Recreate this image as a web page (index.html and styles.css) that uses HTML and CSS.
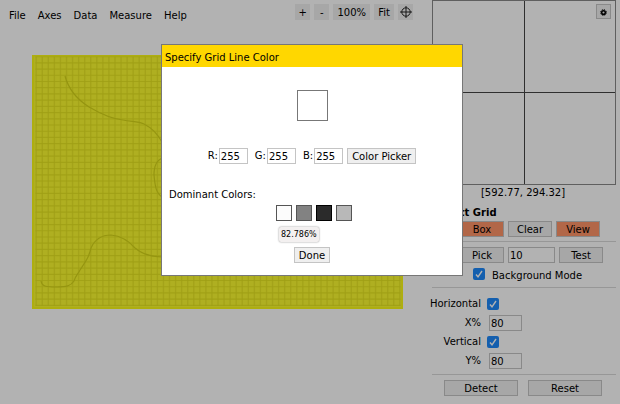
FILE: index.html
```html
<!DOCTYPE html>
<html lang="en">
<head>
<meta charset="utf-8">
<title>Plot digitizer</title>
<link rel="stylesheet" href="styles.css">
</head>
<body>
<div class="app">
  <main class="workspace">
    <header class="topbar">
      <nav class="menu">
        <a href="#">File</a><a href="#">Axes</a><a href="#">Data</a><a href="#">Measure</a><a href="#">Help</a>
      </nav>
      <div class="zoom-tools">
        <button class="flat step">+</button>
        <button class="flat step">-</button>
        <button class="flat wide">100%</button>
        <button class="flat">Fit</button>
        <button class="flat step icon" aria-label="Crosshair">
          <svg width="12" height="12" viewBox="0 0 12 12" fill="none" stroke="#222"><circle cx="6" cy="6" r="4.2"/><path d="M6 0v12M0 6h12"/></svg>
        </button>
      </div>
    </header>
    <svg class="plot" viewBox="0 0 371 254" role="img" aria-label="Plot image">
      <rect width="371" height="254" fill="#fbfb30"/>
      <path d="M3.5 126H368.5" stroke="#ebea26" stroke-width="250" stroke-dasharray="1.4 4.66"/>
      <path d="M186 1V251" stroke="#e4e31e" stroke-opacity=".8" stroke-width="365" stroke-dasharray="1.2 5.02"/>
      <path class="edge" d="M1 0V253H370V0"/>
      <path class="edge" d="M0 .5H371"/>
      <path class="curve" d="M33 21C37 36 46 45 57 52C69 59 80 64 91 65C100 67 105 66 112 69C120 73 125 78 130 87M131 103C124 105 122 111 122 120C123 131 124 138 130 142M9 226C10 232 15 232 25 232C34 232 39 231 42 226C44 220 46 219 48 215C54 206 57 202 59 193C63 184 70 180 79 180C89 181 97 186 103 193C110 199 118 202 131 202"/>
    </svg>
  </main>

  <aside class="sidebar">
    <div class="preview">
      <button class="settings" aria-label="Settings">
        <svg width="7" height="7" viewBox="0 0 7 7"><circle cx="3.5" cy="3.5" r="1.8" fill="none" stroke="#000" stroke-width="1.5"/><circle cx="3.5" cy="3.5" r="2.9" fill="none" stroke="#000" stroke-width="1" stroke-dasharray="1.2 1.08"/></svg>
      </button>
    </div>
    <p class="coords">[592.77, 294.32]</p>
    <h2>Detect Grid</h2>
    <div class="row mask">
      <button class="active">Box</button>
      <button>Clear</button>
      <button class="active">View</button>
    </div>
    <hr>
    <div class="row pick">
      <button>Pick</button>
      <input type="text" value="10" aria-label="Color distance">
      <button>Test</button>
    </div>
    <label class="mode"><input type="checkbox" checked> Background Mode</label>
    <hr>
    <div class="options">
      <label for="horizontal">Horizontal</label><input id="horizontal" type="checkbox" checked>
      <label for="xpct">X%</label><input id="xpct" type="text" value="80">
      <label for="vertical">Vertical</label><input id="vertical" type="checkbox" checked>
      <label for="ypct">Y%</label><input id="ypct" type="text" value="80">
    </div>
    <hr>
    <div class="row actions">
      <button>Detect</button>
      <button>Reset</button>
    </div>
  </aside>
</div>

<div class="shade">
  <section class="dialog" role="dialog" aria-labelledby="dialog-title">
    <h1 id="dialog-title">Specify Grid Line Color</h1>
    <div class="chosen"></div>
    <div class="rgb">
      <label for="red">R:</label><input id="red" type="text" value="255">
      <label for="green">G:</label><input id="green" type="text" value="255">
      <label for="blue">B:</label><input id="blue" type="text" value="255">
      <button>Color Picker</button>
    </div>
    <p class="caption">Dominant Colors:</p>
    <div class="swatches">
      <button class="swatch white" aria-label="White"></button>
      <button class="swatch gray" aria-label="Gray"></button>
      <button class="swatch black" aria-label="Black"></button>
      <button class="swatch silver" aria-label="Silver"></button>
      <span class="tip" role="tooltip">82.786%</span>
    </div>
    <button class="done">Done</button>
  </section>
</div>
</body>
</html>
```
FILE: styles.css
```css
* {
  box-sizing: border-box;
}

body {
  margin: 0;
  background: #fff;
  color: #000;
  font: 10px/16px Verdana, "DejaVu Sans", sans-serif;
}

button,
input {
  margin: 0;
  font: inherit;
  color: inherit;
}

button {
  height: 16px;
  padding: 2px 4px 0;
  border: 1px solid #c4c4c4;
  background: #efefef;
  line-height: 12px;
}

input[type="text"] {
  height: 16px;
  padding: 1px 1px 0;
  border: 1px solid #c4c4c4;
  border-radius: 0;
  background: #fff;
  line-height: 12px;
}

input[type="checkbox"] {
  appearance: none;
  width: 12px;
  height: 12px;
  border-radius: 2px;
  background: #1e88fa url("data:image/svg+xml,%3Csvg xmlns='http://www.w3.org/2000/svg' viewBox='0 0 12 12'%3E%3Cpath d='M3 6.5L5 8.8L9 3' fill='none' stroke='white' stroke-width='1.4'/%3E%3C/svg%3E");
}

p,
h1,
h2 {
  margin: 0;
  font-size: 10px;
}

hr {
  width: 100%;
  margin: 0;
  border: 0;
  border-top: 1px solid #d8d8d8;
}

.app {
  display: grid;
  grid-template-columns: 1fr 188px;
  min-height: 100vh;
}

.topbar {
  display: flex;
  justify-content: space-between;
  padding: 4px 19px 0 9px;
}

.menu {
  display: flex;
  gap: 12px;
  padding-top: 4px;
}

.menu a {
  height: 15px;
  color: inherit;
  text-decoration: none;
}

.zoom-tools {
  display: flex;
  gap: 4px;
}

.flat {
  border: 0;
}

.step {
  width: 15px;
  padding: 2px 0 0;
}

.wide {
  width: 37px;
}

.icon {
  display: grid;
  place-items: center;
  padding: 0;
}

.plot {
  display: block;
  width: calc(100% - 61px);
  margin: 32px 0 0 32px;
}

.edge {
  fill: none;
  stroke: #fafa18;
  stroke-width: 2;
}

.curve {
  fill: none;
  stroke: #d6d618;
  stroke-width: 1.2;
}

.preview {
  display: flex;
  justify-content: flex-end;
  align-items: flex-start;
  width: 184px;
  height: 185px;
  padding: 3px 4px;
  border: 1px solid #888;
  background:
    linear-gradient(#444, #444) center / 1px 100% no-repeat,
    linear-gradient(#444, #444) center / 100% 1px no-repeat;
}

.settings {
  display: grid;
  place-items: center;
  width: 15px;
  height: 15px;
  padding: 2px 0 0;
}

.coords {
  width: 182px;
  text-align: center;
}

.sidebar h2 {
  padding-top: 4px;
}

.row {
  display: flex;
}

.mask {
  gap: 4px;
  padding-left: 28px;
}

.mask button {
  width: 44px;
}

.sidebar hr {
  width: 184px;
}

.mask + hr {
  margin: 4px 0 5px;
}

.active {
  background: #ff9467;
}

.pick {
  gap: 4px;
  padding-left: 28px;
}

.pick button {
  width: 44px;
}

.pick input {
  width: 47px;
}

.mode {
  display: flex;
  gap: 7px;
  padding: 5px 0 3px 41px;
}

.options {
  display: grid;
  grid-template-columns: 49px auto;
  grid-auto-rows: 16px;
  justify-content: start;
  align-items: center;
  gap: 3px 6px;
  padding: 8px 0 5px;
}

.options label {
  justify-self: end;
  white-space: nowrap;
}

.options input[type="text"] {
  width: 33px;
  margin-left: 2px;
}

.actions {
  gap: 10px;
  padding: 5px 0 0 12px;
}

.actions button {
  width: 74px;
}

.shade {
  position: fixed;
  inset: 0;
  display: flex;
  justify-content: center;
  align-items: flex-start;
  padding: 44px 0 0 4px;
  background: rgb(0 0 0 / 30%);
}

.dialog {
  display: flex;
  flex-direction: column;
  align-items: center;
  width: 302px;
  padding-bottom: 12px;
  border: 1px solid #777;
  background: #fff;
}

.dialog h1 {
  align-self: stretch;
  padding: 5px 3px 1px;
  background: #ffd700;
  font-weight: normal;
}

.chosen {
  width: 31px;
  height: 31px;
  margin: 23px 0 27px;
  border: 1px solid #777;
}

.rgb {
  display: flex;
}

.rgb label {
  padding-right: 1px;
}

.rgb input {
  width: 29px;
  margin-right: 7px;
}

.rgb #blue {
  margin-right: 4px;
}

.caption {
  align-self: stretch;
  margin: 23px 0 2px;
  padding-left: 7px;
}

.swatches {
  position: relative;
  display: flex;
  gap: 4px;
  margin-left: 4px;
}

.swatch {
  width: 16px;
  border-color: #555;
}

.white { background: #fcfcfc; }
.gray { background: #828282; }
.black { background: #2b2b2b; border-color: #000; }
.silver { background: #b8b8b8; }

.tip {
  position: absolute;
  top: 22px;
  left: 3px;
  padding: 0 2px;
  border-radius: 2px;
  background: #f3f0f0;
  box-shadow: 0 0 2px #888;
  font-size: 8px;
  line-height: 15px;
}

.done {
  margin-top: 26px;
}
```
